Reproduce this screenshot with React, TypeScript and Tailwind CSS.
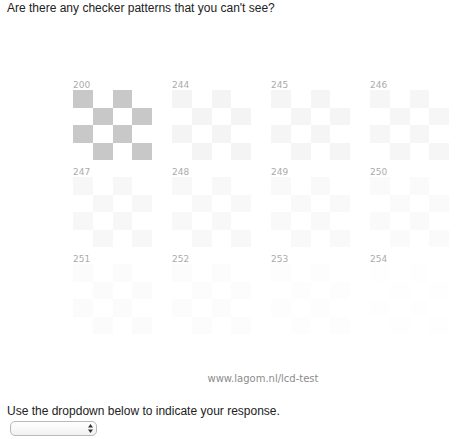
import { useState } from "react";

type Tile = {
  label: string;
  square: string;
};

const tiles: Tile[] = [
  { label: "200", square: "bg-[#c8c8c8]" },
  { label: "244", square: "bg-[#f4f4f4]" },
  { label: "245", square: "bg-[#f5f5f5]" },
  { label: "246", square: "bg-[#f6f6f6]" },
  { label: "247", square: "bg-[#f7f7f7]" },
  { label: "248", square: "bg-[#f8f8f8]" },
  { label: "249", square: "bg-[#f9f9f9]" },
  { label: "250", square: "bg-[#fafafa]" },
  { label: "251", square: "bg-[#fbfbfb]" },
  { label: "252", square: "bg-[#fcfcfc]" },
  { label: "253", square: "bg-[#fdfdfd]" },
  { label: "254", square: "bg-[#fefefe]" },
];

const cells = Array.from({ length: 16 }, (_, i) => i);

function CheckerTile({ tile }: { tile: Tile }) {
  return (
    <div className="w-[79px]">
      <p className="h-[9px] font-['DejaVu_Sans',sans-serif] text-[9px] leading-[9px] text-[#ababab]">{tile.label}</p>
      <div className="grid grid-cols-4">
        {cells.map((i) => {
          const row = Math.floor(i / 4);
          const col = i % 4;
          const filled = (row + col) % 2 === 0;
          return <div className={`h-[17.5px] ${filled ? tile.square : "bg-white"}`} key={i} />;
        })}
      </div>
    </div>
  );
}

export default function App() {
  const [answer, setAnswer] = useState("");

  return (
    <div className="h-[439px] w-[476px] overflow-hidden bg-white font-['Liberation_Sans',Arial,sans-serif] text-[#222]">
      <p className="pl-[7px] pt-[1px] text-[12px] leading-[14px]">Are there any checker patterns that you can't see?</p>

      <div className="ml-[73px] mt-[66px] grid w-[376px] grid-cols-4 gap-x-[20px] gap-y-[8px]">
        {tiles.map((tile) => (
          <CheckerTile key={tile.label} tile={tile} />
        ))}
      </div>

      <p className="ml-[73px] mt-[39px] w-[380px] text-center font-['DejaVu_Sans',sans-serif] text-[10px] leading-[12px] text-[#8c8c8c]">
        www.lagom.nl/lcd-test
      </p>

      <p className="mt-[19px] pl-[7px] text-[12px] leading-[14px]">Use the dropdown below to indicate your response.</p>

      <div className="relative ml-[10px] mt-[3px] h-[15px] w-[87px]">
        <select
          className="block h-[15px] w-[87px] appearance-none rounded-[5px] border border-[#b9b9b9] bg-gradient-to-b from-white to-[#f1f1f1] px-[6px] text-[10px] leading-[13px] outline-none"
          onChange={(event) => setAnswer(event.target.value)}
          value={answer}
        >
          <option value=""></option>
          <option value="none">None</option>
          <option value="some">Some</option>
        </select>
        <svg className="pointer-events-none absolute left-[78px] top-[3px]" height="9" viewBox="0 0 5 9" width="5">
          <path d="M2.5 0 L5 3.5 L0 3.5 Z" fill="#333" />
          <path d="M2.5 9 L5 5.5 L0 5.5 Z" fill="#333" />
        </svg>
      </div>
    </div>
  );
}
